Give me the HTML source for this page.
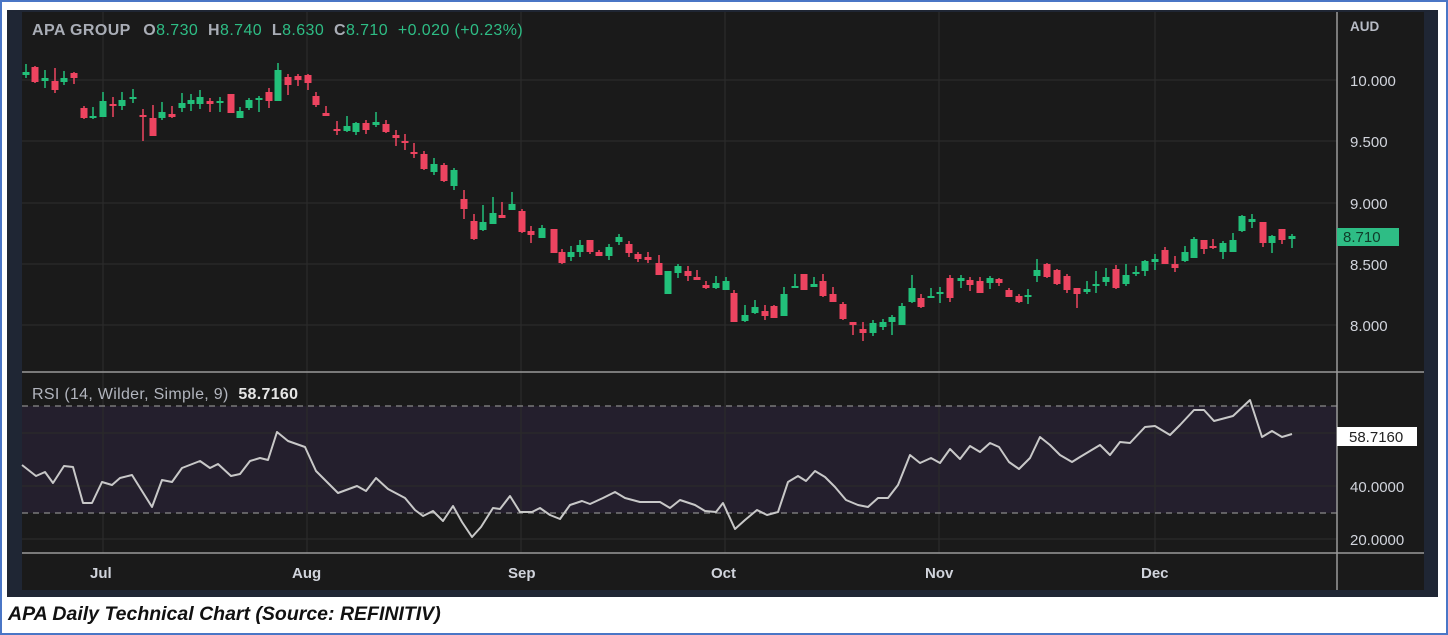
<!DOCTYPE html>
<html><head><meta charset="utf-8"><style>
html,body{margin:0;padding:0;background:#fff;}
body{width:1448px;height:635px;position:relative;overflow:hidden;font-family:"Liberation Sans",sans-serif;}
#frame{position:absolute;left:0;top:0;width:1444px;height:631px;border:2px solid #4a76c6;}
#cap{position:absolute;left:8px;top:603px;font-size:19.5px;font-weight:bold;font-style:italic;color:#111;}
svg{position:absolute;left:0;top:0;}
</style></head><body>
<div id="frame"></div>
<svg width="1448" height="635" id="s" xmlns="http://www.w3.org/2000/svg">
<rect x="7" y="10" width="1431" height="587" fill="#1f2634"/>
<rect x="22" y="12" width="1402" height="578" fill="#1a1a1a"/>
<rect x="22" y="406" width="1315" height="107" fill="#241f2d"/>
<g stroke="#2b2b2b" stroke-width="1.2">
<line x1="22" y1="80" x2="1337" y2="80"/><line x1="22" y1="141" x2="1337" y2="141"/><line x1="22" y1="203" x2="1337" y2="203"/><line x1="22" y1="264" x2="1337" y2="264"/><line x1="22" y1="325" x2="1337" y2="325"/>
<line x1="22" y1="433" x2="1337" y2="433"/><line x1="22" y1="486" x2="1337" y2="486"/><line x1="22" y1="539" x2="1337" y2="539"/>
<line x1="103" y1="12" x2="103" y2="553"/><line x1="307" y1="12" x2="307" y2="553"/><line x1="521" y1="12" x2="521" y2="553"/><line x1="725" y1="12" x2="725" y2="553"/><line x1="939" y1="12" x2="939" y2="553"/><line x1="1155" y1="12" x2="1155" y2="553"/>
</g>
<g stroke="#8a8a8a" stroke-width="1.2" stroke-dasharray="6,5">
<line x1="22" y1="406" x2="1337" y2="406"/><line x1="22" y1="513" x2="1337" y2="513"/>
</g>
<g stroke="#9a9a9a" stroke-width="1.5">
<line x1="22" y1="372" x2="1424" y2="372"/><line x1="22" y1="553" x2="1424" y2="553"/><line x1="1337" y1="12" x2="1337" y2="590"/>
</g>
<g id="c"></g>
<polyline id="rsi" fill="none" stroke="#c8c8c8" stroke-width="2" stroke-linejoin="round"/>
<g font-family="Liberation Sans,sans-serif" font-size="15" fill="#d1d4dc">
<text x="1350" y="31" font-size="13.5" font-weight="bold" fill="#b8bcc6">AUD</text>
<text x="1350" y="86">10.000</text><text x="1350" y="147">9.500</text><text x="1350" y="209">9.000</text><text x="1350" y="270">8.500</text><text x="1350" y="331">8.000</text>
<text x="1350" y="492">40.0000</text><text x="1350" y="545">20.0000</text>
<text x="90" y="578" font-weight="bold">Jul</text><text x="292" y="578" font-weight="bold">Aug</text><text x="508" y="578" font-weight="bold">Sep</text><text x="711" y="578" font-weight="bold">Oct</text><text x="925" y="578" font-weight="bold">Nov</text><text x="1141" y="578" font-weight="bold">Dec</text>
</g>
<rect x="1337" y="228" width="62" height="18" fill="#2ebd85"/>
<text x="1343" y="242" font-family="Liberation Sans,sans-serif" font-size="15" fill="#0f3d2a">8.710</text>
<rect x="1337" y="427" width="80" height="19" fill="#fff"/>
<text x="1349" y="442" font-family="Liberation Sans,sans-serif" font-size="15" fill="#222">58.7160</text>
<text x="32" y="35" font-family="Liberation Sans,sans-serif" font-size="16" letter-spacing="0.4" font-weight="bold" fill="#a9adb6">APA GROUP <tspan dx="8">O</tspan><tspan fill="#2ebd85" font-weight="normal">8.730</tspan> <tspan dx="5">H</tspan><tspan fill="#2ebd85" font-weight="normal">8.740</tspan> <tspan dx="5">L</tspan><tspan fill="#2ebd85" font-weight="normal">8.630</tspan> <tspan dx="5">C</tspan><tspan fill="#2ebd85" font-weight="normal">8.710</tspan> <tspan dx="5" fill="#2ebd85" font-weight="normal">+0.020 (+0.23%)</tspan></text>
<text x="32" y="399" font-family="Liberation Sans,sans-serif" font-size="16" letter-spacing="0.3" fill="#b2b5be">RSI (14, Wilder, Simple, 9) <tspan dx="5" fill="#e6e6e6" font-weight="bold">58.7160</tspan></text>
</svg>
<div id="cap">APA Daily Technical Chart (Source: REFINITIV)</div>
<script>
var d=[[26,72,75,64,78,'g'],[35,67,82,66,83,'r'],[45,78,81,70,88,'g'],[55,81,90,68,93,'r'],[64,78,82,71,85,'g'],[74,73,78,72,84,'r'],
[84,108,118,106,119,'r'],[93,116,118,107,119,'g'],[103,101,117,92,117,'g'],[113,104,106,97,117,'r'],[122,100,106,92,110,'g'],[133,97,99,89,103,'g'],[143,115,117,109,141,'r'],[153,118,136,105,136,'r'],[162,112,118,102,120,'g'],[172,114,117,106,118,'r'],[182,103,108,93,112,'g'],[191,100,104,94,111,'g'],[200,97,104,90,109,'g'],[210,101,104,98,112,'r'],[220,101,103,97,112,'g'],[231,94,113,94,113,'r'],[240,111,118,107,118,'g'],[249,100,108,98,110,'g'],[259,98,100,96,112,'g'],[269,92,101,88,108,'r'],[278,70,101,63,101,'g'],[288,77,85,74,95,'r'],[298,76,80,74,86,'r'],[308,75,83,74,90,'r'],[316,96,105,92,107,'r'],[326,113,116,106,116,'r'],[337,129,131,121,135,'r'],[347,126,131,116,132,'g'],[356,123,132,122,135,'g'],[366,123,130,120,134,'r'],[376,122,125,112,127,'g'],[386,124,132,120,133,'r'],[396,135,138,130,146,'r'],[405,141,143,134,150,'r'],[414,152,154,143,158,'r'],[424,154,169,151,170,'r'],[434,164,172,158,175,'g'],[444,165,181,163,182,'r'],[454,170,186,168,190,'g'],
[464,199,209,190,219,'r'],[474,221,239,214,240,'r'],[483,222,230,205,231,'g'],[493,213,224,197,224,'g'],[502,215,218,202,218,'r'],[512,204,210,192,210,'g'],[522,211,232,209,233,'r'],[531,231,235,226,243,'r'],[542,228,238,225,238,'g'],[554,229,253,229,253,'r'],[562,252,263,249,264,'r'],[571,252,257,246,261,'g'],[580,245,252,240,257,'g'],[590,240,252,240,254,'r'],[599,252,256,250,256,'r'],[609,247,256,244,260,'g'],[619,237,242,234,245,'g'],[629,244,253,241,257,'r'],[638,254,259,252,262,'r'],[648,257,260,252,263,'r'],[659,263,275,255,275,'r'],[668,271,294,271,294,'g'],[678,266,273,264,278,'g'],[688,271,276,266,281,'r'],[697,277,280,270,280,'r'],[706,285,288,281,289,'r'],[716,283,288,276,289,'g'],[726,281,290,277,290,'g'],[734,293,322,290,322,'r'],[745,315,321,305,322,'g'],[755,307,313,300,314,'g'],[765,311,316,305,320,'r'],[774,306,318,305,318,'r'],[784,294,316,287,316,'g'],[795,286,288,274,288,'g'],[804,274,290,274,290,'r'],[814,284,287,277,287,'g'],[823,281,296,274,297,'r'],[833,294,302,287,302,'r'],[843,304,319,302,320,'r'],[853,322,325,322,335,'r'],[863,329,333,322,341,'r'],[873,323,333,320,336,'g'],[883,322,327,319,330,'g'],[892,317,322,315,335,'g'],[902,306,325,303,325,'g'],
[912,288,302,275,303,'g'],[921,298,307,294,308,'r'],[931,296,298,288,298,'g'],[940,292,294,287,303,'g'],[950,278,298,275,302,'r'],[961,278,281,275,288,'g'],[970,280,285,277,291,'r'],[980,281,293,277,293,'r'],[990,278,283,276,289,'g'],[999,279,283,278,286,'r'],[1009,290,297,288,297,'r'],[1019,296,302,294,303,'r'],[1028,295,297,289,304,'g'],[1037,270,276,259,282,'g'],[1047,264,277,263,278,'r'],[1057,270,284,269,285,'r'],[1067,276,290,274,293,'r'],[1077,288,294,288,308,'r'],[1087,289,292,281,294,'g'],[1096,284,286,271,293,'g'],[1106,277,282,268,286,'g'],[1116,269,288,265,289,'r'],[1126,275,284,264,286,'g'],[1136,272,274,266,276,'g'],[1145,261,271,260,276,'g'],[1155,259,262,254,270,'g'],[1165,250,264,247,264,'r'],[1175,264,268,256,272,'r'],[1185,252,261,246,262,'g'],[1194,239,258,237,258,'g'],[1204,240,249,240,254,'r'],[1213,246,248,239,249,'r'],[1223,243,252,241,259,'g'],[1233,240,252,233,252,'g'],[1242,216,231,215,232,'g'],[1252,219,222,214,228,'g'],[1263,222,243,222,247,'r'],[1272,236,243,235,253,'g'],[1282,229,240,229,244,'r'],[1292,236,239,234,248,'g']];
var g=document.getElementById('c'),h='';
d.forEach(function(c){var col=c[5]=='g'?'#22c07a':'#ee4460';
h+='<line x1="'+c[0]+'" x2="'+c[0]+'" y1="'+c[3]+'" y2="'+c[4]+'" stroke="'+col+'" stroke-width="1.5"/>';
var bh=Math.max(2,c[2]-c[1]);h+='<rect x="'+(c[0]-3.5)+'" y="'+c[1]+'" width="7" height="'+bh+'" fill="'+col+'"/>';});
g.innerHTML=h;
document.getElementById('rsi').setAttribute('points','22,465 36,476 45,472 53,483 64,466 73,467 83,503 92,503 102,482 112,485 120,478 132,475 152,507 162,480 172,482 182,468 200,461 210,468 218,464 231,476 240,474 250,461 260,458 268,460 277,432 288,441 305,447 316,471 338,493 357,486 366,491 376,478 388,489 405,498 415,510 423,516 433,511 443,521 453,506 462,522 472,537 481,527 493,508 500,509 510,496 520,512 532,512 540,508 550,515 560,519 570,505 582,501 590,504 603,498 615,492 625,498 640,502 660,502 670,508 680,500 695,505 705,511 716,512 723,503 735,529 745,520 757,510 767,515 778,512 788,482 798,476 806,481 815,471 825,477 835,487 846,500 858,505 868,507 878,498 888,498 898,485 910,455 920,463 931,458 940,463 950,449 960,459 970,446 980,452 990,443 999,447 1009,462 1019,469 1030,458 1040,437 1050,445 1060,455 1072,462 1080,457 1090,451 1100,445 1110,455 1120,442 1130,443 1145,427 1155,426 1170,435 1180,425 1194,410 1204,410 1214,421 1233,416 1250,400 1262,437 1272,431 1282,437 1292,434');
</script>
</body></html>
